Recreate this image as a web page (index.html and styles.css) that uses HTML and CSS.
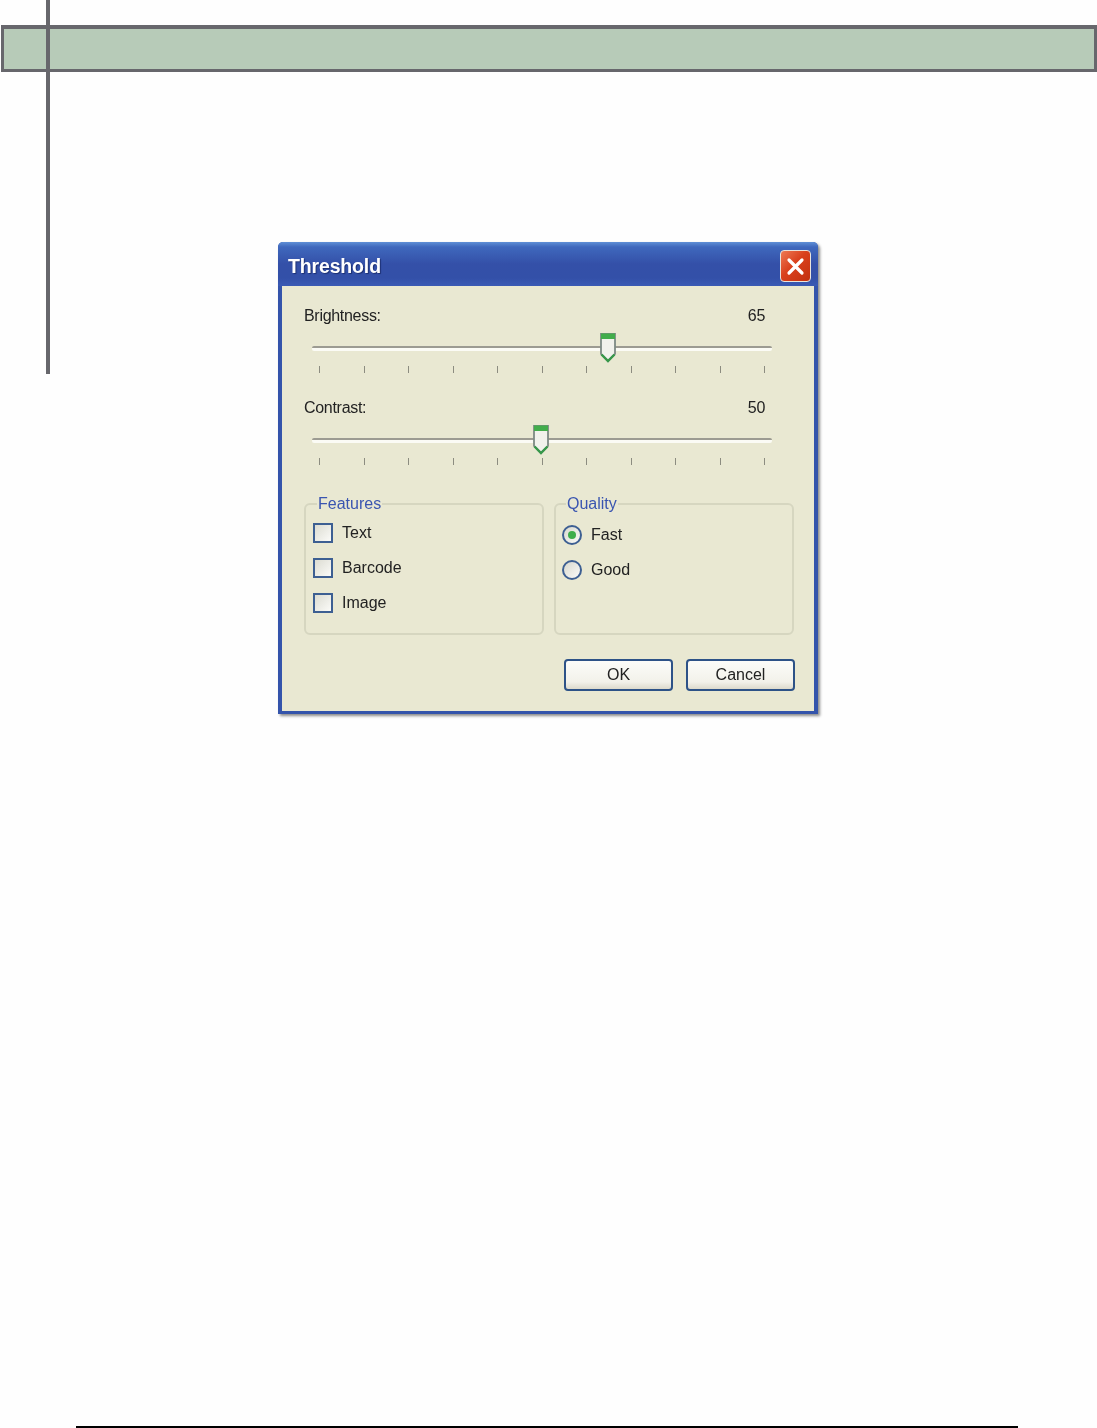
FILE: index.html
```html
<!DOCTYPE html>
<html lang="en">

<head>
    <meta charset="UTF-8">
    <meta name="viewport" content="width=device-width, initial-scale=1.0">
    <title>Threshold</title>
    <link rel="stylesheet" href="styles.css">
</head>

<body>
    <div class="page">
        <div class="margin-line"></div>
        <div class="band"></div>

        <div class="dialog">
            <div class="titlebar">
                <span class="title">Threshold</span>
                <button class="close">
                    <svg width="19" height="19" viewBox="0 0 19 19">
                        <path d="M3 3 L16 16 M16 3 L3 16" stroke="#fff" stroke-width="3.2" stroke-linecap="round" />
                    </svg>
                </button>
            </div>

            <div class="client">
                <div class="setting">
                    <div class="setting-head"><span>Brightness:</span><span>65</span></div>
                    <div class="track">
                        <div class="rail">
                            <svg class="thumb" style="left: 65%" width="18" height="31" viewBox="0 0 18 31">
                                <path d="M2 2 H16 V22 L9 29 L2 22 Z" fill="#f1f2ec" stroke="#7d8a84" stroke-width="1.8" />
                                <path d="M2 1.5 H16 V7 H2 Z" fill="#42ad4b" />
                                <path d="M2.5 22.5 L9 29 L15.5 22.5" fill="none" stroke="#37984a" stroke-width="2.4" />
                            </svg>
                        </div>
                    </div>
                    <div class="ticks">
                        <i></i><i></i><i></i><i></i><i></i><i></i><i></i><i></i><i></i><i></i><i></i>
                    </div>
                </div>

                <div class="setting">
                    <div class="setting-head"><span>Contrast:</span><span>50</span></div>
                    <div class="track">
                        <div class="rail">
                            <svg class="thumb" style="left: 50%" width="18" height="31" viewBox="0 0 18 31">
                                <path d="M2 2 H16 V22 L9 29 L2 22 Z" fill="#f1f2ec" stroke="#7d8a84" stroke-width="1.8" />
                                <path d="M2 1.5 H16 V7 H2 Z" fill="#42ad4b" />
                                <path d="M2.5 22.5 L9 29 L15.5 22.5" fill="none" stroke="#37984a" stroke-width="2.4" />
                            </svg>
                        </div>
                    </div>
                    <div class="ticks">
                        <i></i><i></i><i></i><i></i><i></i><i></i><i></i><i></i><i></i><i></i><i></i>
                    </div>
                </div>

                <div class="groups">
                    <fieldset class="group">
                        <legend>Features</legend>
                        <div class="option"><span class="check"></span>Text</div>
                        <div class="option"><span class="check"></span>Barcode</div>
                        <div class="option"><span class="check"></span>Image</div>
                    </fieldset>
                    <fieldset class="group group-radio">
                        <legend>Quality</legend>
                        <div class="option"><span class="radio radio-on"></span>Fast</div>
                        <div class="option"><span class="radio"></span>Good</div>
                    </fieldset>
                </div>

                <div class="buttons">
                    <button class="btn">OK</button>
                    <button class="btn">Cancel</button>
                </div>
            </div>
        </div>

        <div class="footer-rule"></div>
    </div>
</body>

</html>
```

FILE: styles.css
```css
html,
body {
    margin: 0;
    padding: 0;
    background-color: #fefefe;
}

.page {
    position: relative;
    display: flex;
    flex-direction: column;
    height: 1428px;
    overflow: hidden;
    font-family: "Liberation Sans", Arial, sans-serif;
}

.margin-line {
    position: absolute;
    left: 46px;
    top: 0;
    width: 4px;
    height: 374px;
    background-color: #67676c;
}

.band {
    box-sizing: border-box;
    height: 47px;
    margin: 25px 0 0 1px;
    background-color: #b7cbb8;
    border: 3px solid #67676c;
    border-top-width: 4px;
}

.dialog {
    width: 540px;
    margin: 170px 0 0 278px;
    border-radius: 5px 5px 0 0;
    background-color: #3454ab;
    box-shadow: 2px 2px 3px #8a8a8a;
    filter: blur(0.45px);
}

.titlebar {
    display: flex;
    align-items: center;
    justify-content: space-between;
    box-sizing: border-box;
    height: 44px;
    padding: 4px 7px 0 10px;
    border-radius: 5px 5px 0 0;
    background: linear-gradient(#5f8fd6 0, #3f68bd 5px, #3450a8 22px, #3350a8 36px, #3a5ab4 44px);
}

.title {
    color: #fff;
    font-size: 19.5px;
    font-weight: bold;
    letter-spacing: -0.15px;
    text-shadow: 1px 1px 1px #1c2f70;
}

.close {
    display: flex;
    align-items: center;
    justify-content: center;
    box-sizing: border-box;
    width: 31px;
    height: 32px;
    padding: 0;
    border: 1px solid #e9e4dc;
    border-radius: 4px;
    background: linear-gradient(135deg, #ee7a55, #d9401c 45%, #c2300f);
}

.client {
    box-sizing: border-box;
    height: 425px;
    margin: 0 4px 3px;
    padding: 20px 20px 0 22px;
    background-color: #e9e8d2;
    color: #222;
    font-size: 16px;
}

.setting {
    margin-bottom: 25px;
}

.setting-head {
    display: flex;
    justify-content: space-between;
    height: 20px;
    line-height: 20px;
    margin-right: 29px;
    letter-spacing: -0.3px;
}

.track {
    box-sizing: border-box;
    width: 460px;
    height: 5px;
    margin: 20px 0 -1px 8px;
    padding: 0 8px;
    border-top: 2px solid #9c9b92;
    border-bottom: 3px solid #fbfbf5;
    border-radius: 2px;
}

.rail {
    position: relative;
    height: 0;
}

.thumb {
    position: absolute;
    top: -16px;
    margin-left: -10px;
}

.ticks {
    display: flex;
    justify-content: space-between;
    width: 446px;
    margin: 16px 0 0 15px;
}

.ticks i {
    display: block;
    width: 1px;
    height: 7px;
    background-color: #8c8c80;
}

.groups {
    display: flex;
    gap: 10px;
    margin-top: 29px;
}

.group {
    box-sizing: border-box;
    display: flex;
    flex-direction: column;
    gap: 15px;
    width: 240px;
    height: 141px;
    min-width: 0;
    margin: 0;
    padding: 9px 7px 0;
    border: 2px solid #d6d6c0;
    border-radius: 6px;
}

.group-radio {
    padding: 11px 6px 0;
}

.group legend {
    height: 20px;
    line-height: 20px;
    margin-left: 4px;
    padding: 0 1px;
    color: #3a55b0;
}

.option {
    display: flex;
    align-items: center;
    gap: 9px;
    height: 20px;
}

.check {
    box-sizing: border-box;
    width: 20px;
    height: 20px;
    border: 2px solid #3d5f92;
    background: linear-gradient(135deg, #dcdcd2, #fbfbf8);
}

.radio {
    position: relative;
    box-sizing: border-box;
    width: 20px;
    height: 20px;
    border: 2px solid #3d5f92;
    border-radius: 50%;
    background: linear-gradient(135deg, #d8d8ce, #fbfbf8);
}

.radio-on::after {
    content: "";
    position: absolute;
    left: 4px;
    top: 4px;
    width: 8px;
    height: 8px;
    border-radius: 50%;
    background-color: #3fae4c;
}

.buttons {
    display: flex;
    justify-content: flex-end;
    gap: 13px;
    margin: 24px -1px 0 0;
}

.btn {
    box-sizing: border-box;
    width: 109px;
    height: 32px;
    padding: 0;
    border: 2px solid #2d5287;
    border-radius: 4px;
    background: linear-gradient(#fcfcf9, #f2f1ea 75%, #dcd9cc);
    color: #222;
    font-family: inherit;
    font-size: 16px;
}

.footer-rule {
    height: 2px;
    margin: auto 79px 0 76px;
    background-color: #000;
}
```
